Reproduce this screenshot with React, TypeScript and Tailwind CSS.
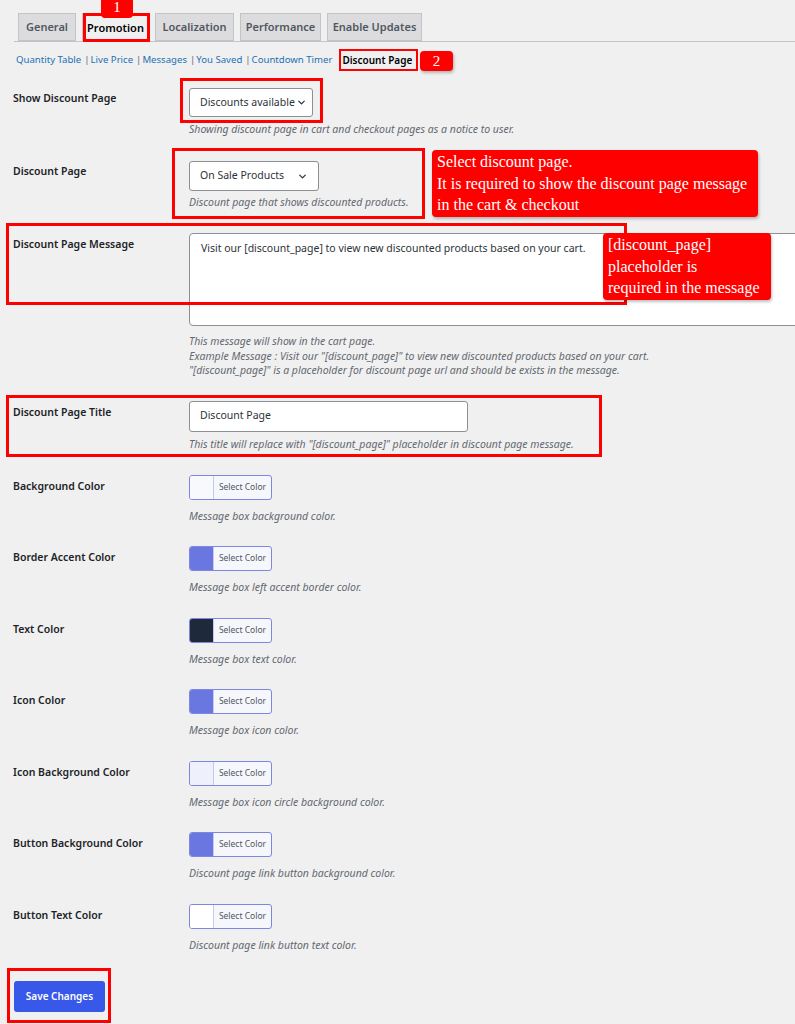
import { ChevronDown } from "lucide-react";

const font = { fontFamily: '"Noto Sans", "Open Sans", Arial, sans-serif' };
const serif = { fontFamily: '"Liberation Serif", "Times New Roman", serif' };

const tabs = [
  { t: "General", w: "w-[58px]" },
  { t: "Promotion", w: "w-[67px]" },
  { t: "Localization", w: "w-[79px]" },
  { t: "Performance", w: "w-[81px]" },
  { t: "Enable Updates", w: "w-[95px]" },
];
const subnav = ["Quantity Table", "Live Price", "Messages", "You Saved", "Countdown Timer"];

const colors = [
  { l: "Background Color", c: "#f8f9fd", d: "Message box background color." },
  { l: "Border Accent Color", c: "#6a77e0", d: "Message box left accent border color." },
  { l: "Text Color", c: "#1e293b", d: "Message box text color." },
  { l: "Icon Color", c: "#6a77e0", d: "Message box icon color." },
  { l: "Icon Background Color", c: "#eef0fb", d: "Message box icon circle background color." },
  { l: "Button Background Color", c: "#6a77e0", d: "Discount page link button background color." },
  { l: "Button Text Color", c: "#ffffff", d: "Discount page link button text color." },
];

function Label({ children, pt = "pt-[3px]" }: { children: React.ReactNode; pt?: string }) {
  return (
    <div className={`w-[189px] shrink-0 pl-[13px] ${pt} text-[10.5px] font-semibold leading-[15px] text-[#1d2327]`}>
      {children}
    </div>
  );
}

function Desc({ children, className = "" }: { children: React.ReactNode; className?: string }) {
  return <p className={`whitespace-nowrap text-[10.5px] italic leading-[14px] text-[#646970] ${className}`}>{children}</p>;
}

function ColorButton({ c }: { c: string }) {
  return (
    <div className="flex h-[25px] w-[83px] overflow-hidden rounded-[3px] border border-[#7d87e2] bg-[#f6f7fc]">
      <div className="w-[24px] border-r border-[#c5c9ee]" style={{ background: c }} />
      <div className="flex flex-1 items-center justify-center text-[8.5px] text-[#50575e]">Select Color</div>
    </div>
  );
}

function Callout({ className, lines }: { className: string; lines: string[] }) {
  return (
    <div
      className={`absolute rounded-[4px] bg-[#ff0000] px-[5px] py-[1px] text-[16px] leading-[21.5px] text-white shadow-[1px_2px_3px_rgba(0,0,0,0.25)] ${className}`}
      style={serif}
    >
      {lines.map((t) => (
        <div key={t} className="whitespace-nowrap">{t}</div>
      ))}
    </div>
  );
}

export default function App() {
  return (
    <div className="relative min-h-[1024px] w-[795px] overflow-hidden bg-[#f0f0f1]" style={font}>
      {/* tabs */}
      <div className="ml-[14px] flex gap-[6px] border-b border-[#c3c4c7] pl-[4px] pt-[13px]">
        {tabs.map(({ t, w }) => (
          <div
            key={t}
            className={
              t === "Promotion"
                ? `-mb-px flex h-[29px] ${w} items-center justify-center border border-b-0 border-[#c3c4c7] bg-[#f0f0f1] text-[11px] font-semibold text-black`
                : `flex h-[28px] ${w} items-center justify-center border border-[#c3c4c7] bg-[#dcdcde] text-[11px] font-semibold text-[#50575e]`
            }
          >
            {t}
          </div>
        ))}
      </div>

      {/* sub navigation */}
      <div className="mt-[11px] flex items-center whitespace-nowrap pl-[16px] text-[9.6px] leading-[14px]">
        {subnav.map((s, i) => (
          <span key={s} className="flex items-center">
            {i > 0 && <span className="ml-[3px] mr-[1px] text-[#646970]">|</span>}
            <span className="text-[#2271b1]">{s}</span>
          </span>
        ))}
        <span className="ml-[10px] text-[10px] font-semibold text-black">Discount Page</span>
      </div>

      {/* show discount page */}
      <div className="mt-[21px] flex">
        <Label pt="pt-[3px]">Show Discount Page</Label>
        <div>
          <div className="flex h-[29px] w-[124px] items-center justify-between whitespace-nowrap rounded-[3px] border border-[#8c8f94] bg-white pl-[10px] pr-[5px] text-[10.5px] text-[#2c3338]">
            <span>Discounts available</span>
            <ChevronDown className="size-[11px]" strokeWidth={2.75} />
          </div>
          <Desc className="mt-[5px]">Showing discount page in cart and checkout pages as a notice to user.</Desc>
        </div>
      </div>

      {/* discount page */}
      <div className="mt-[25px] flex">
        <Label>Discount Page</Label>
        <div>
          <div className="flex h-[30px] w-[130px] items-center justify-between whitespace-nowrap rounded-[3px] border border-[#8c8f94] bg-white pl-[10px] pr-[10px] text-[10.5px] text-[#2c3338]">
            <span>On Sale Products</span>
            <ChevronDown className="size-[11px]" strokeWidth={2.75} />
          </div>
          <Desc className="mt-[4px]">Discount page that shows discounted products.</Desc>
        </div>
      </div>

      {/* discount page message */}
      <div className="mt-[24px] flex">
        <Label pt="pt-[4px]">Discount Page Message</Label>
        <div className="flex-1">
          <div className="h-[93px] w-[640px] rounded-[4px] border border-[#8c8f94] bg-white px-[11px] pt-[7px] text-[10.5px] leading-[15px] text-[#2c3338]">
            Visit our [discount_page] to view new discounted products based on your cart.
          </div>
          <div className="mt-[8px] whitespace-nowrap text-[10.5px] italic leading-[14.5px] text-[#646970]">
            <p>This message will show in the cart page.</p>
            <p>Example Message : Visit our "[discount_page]" to view new discounted products based on your cart.</p>
            <p>"[discount_page]" is a placeholder for discount page url and should be exists in the message.</p>
          </div>
        </div>
      </div>

      {/* discount page title */}
      <div className="mt-[23px] flex">
        <Label pt="pt-[4px]">Discount Page Title</Label>
        <div>
          <div className="flex h-[31px] w-[279px] items-center rounded-[3px] border border-[#8c8f94] bg-white px-[10px] text-[10.5px] text-[#2c3338]">
            Discount Page
          </div>
          <Desc className="mt-[5px]">This title will replace with "[discount_page]" placeholder in discount page message.</Desc>
        </div>
      </div>

      {/* colors */}
      <div className="mt-[24px] flex flex-col gap-[23.5px]">
        {colors.map((r) => (
          <div key={r.l} className="flex">
            <Label pt="pt-[4px]">{r.l}</Label>
            <div>
              <ColorButton c={r.c} />
              <Desc className="mt-[9px]">{r.d}</Desc>
            </div>
          </div>
        ))}
      </div>

      <div className="mt-[29px] pb-[13px] pl-[14px]">
        <button className="h-[31px] w-[91px] rounded-[3px] bg-[#3858e9] text-[10px] font-semibold text-white">
          Save Changes
        </button>
      </div>

      {/* annotations */}
      <div
        className="absolute left-[101px] top-[-4px] flex h-[22px] w-[32px] items-start justify-center rounded-[4px] bg-[#ff0000] pt-[3px] text-[15px] leading-[16px] text-white"
        style={serif}
      >
        1
      </div>
      <div className="absolute left-[83px] top-[13px] h-[29px] w-[67px] border-[3px] border-[#ff0000]" />
      <div className="absolute left-[339px] top-[49px] h-[22px] w-[79px] border-[2px] border-[#ff0000]" />
      <div
        className="absolute left-[420px] top-[51px] flex h-[20px] w-[33px] items-center justify-center rounded-[4px] bg-[#ff0000] text-[15px] text-white shadow-[1px_2px_3px_rgba(0,0,0,0.25)]"
        style={serif}
      >
        2
      </div>
      <div className="absolute left-[180px] top-[78px] h-[45px] w-[143px] border-[3px] border-[#ff0000]" />
      <div className="absolute left-[172px] top-[148px] h-[71px] w-[253px] border-[3px] border-[#ff0000]" />
      <div className="absolute left-[6px] top-[223px] h-[82px] w-[621px] border-[3px] border-[#ff0000]" />
      <div className="absolute left-[6px] top-[395px] h-[62px] w-[596px] border-[3px] border-[#ff0000]" />
      <div className="absolute left-[7px] top-[968px] h-[55px] w-[104px] border-[3px] border-[#ff0000]" />
      <Callout
        className="left-[432px] top-[150px] w-[326px]"
        lines={["Select discount page.", "It is required to show the discount page message", "in the cart & checkout"]}
      />
      <Callout
        className="left-[603px] top-[233px] w-[168px]"
        lines={["[discount_page]", "placeholder is", "required in the message"]}
      />
    </div>
  );
}
